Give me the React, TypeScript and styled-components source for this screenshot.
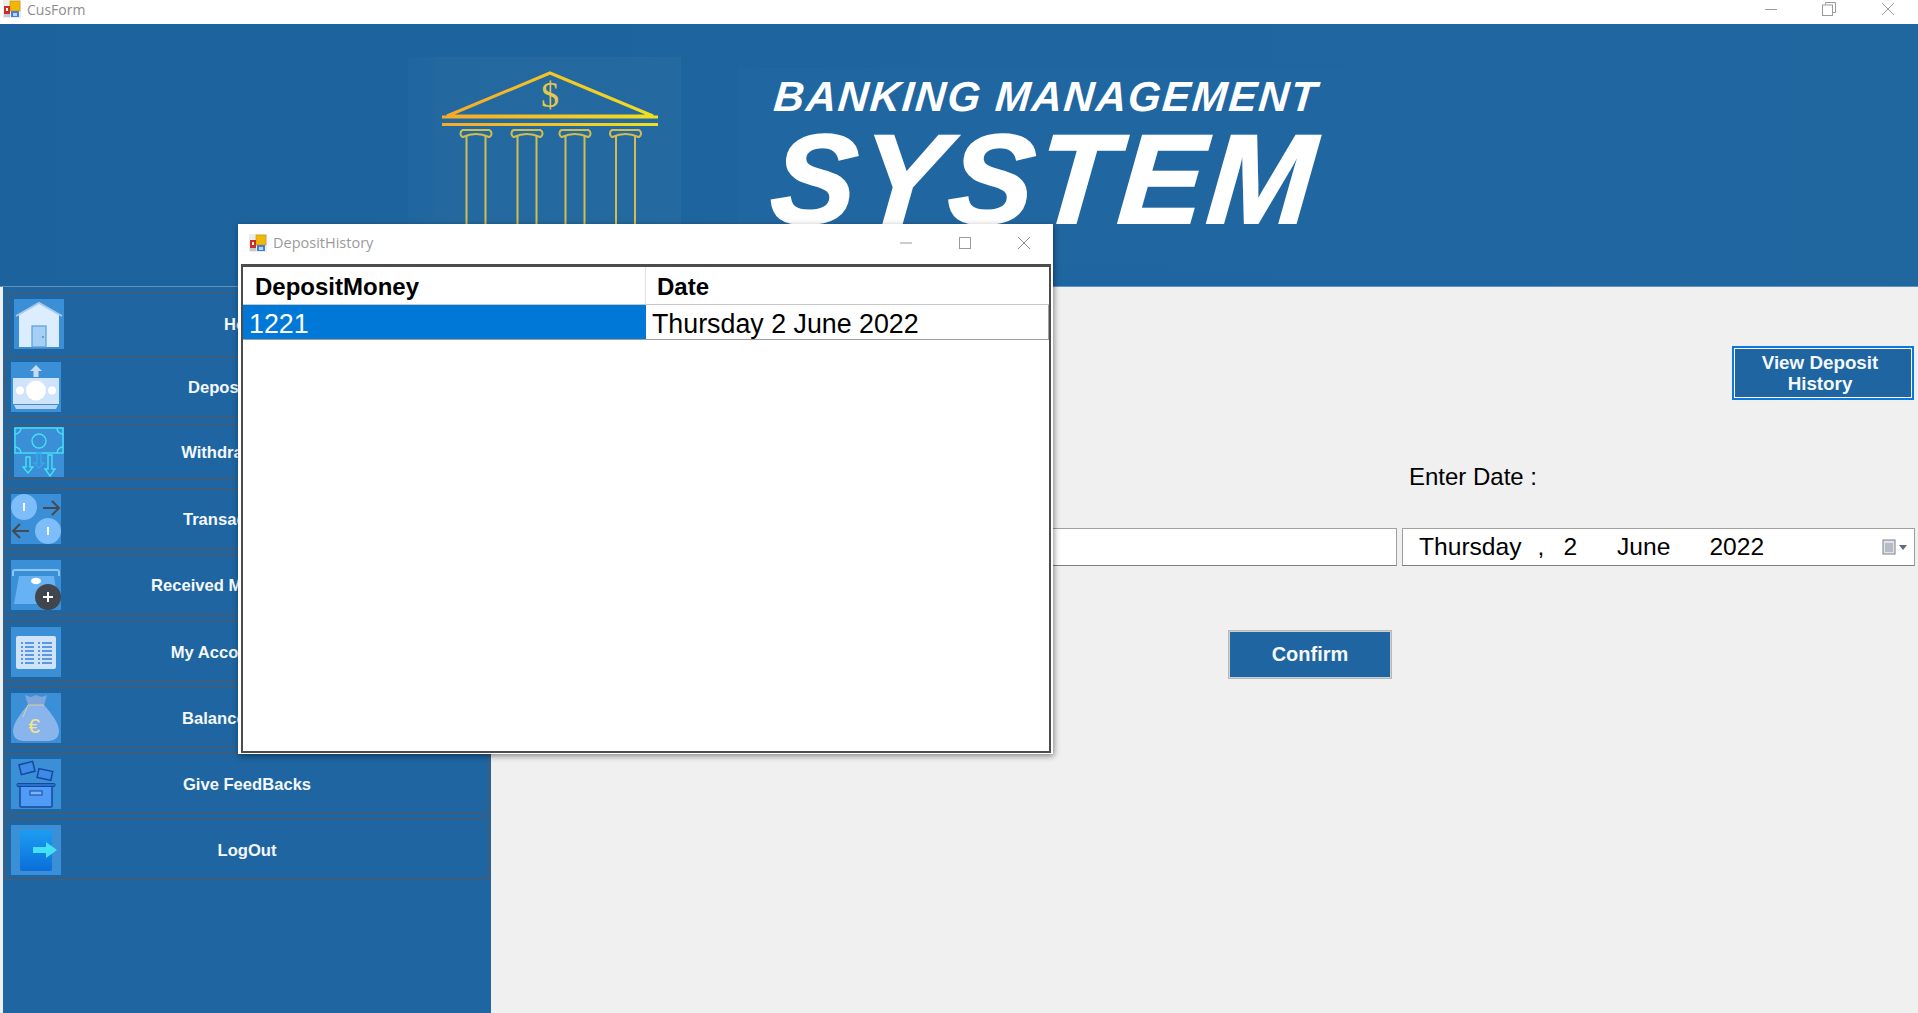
import React, { type FC, type ReactNode } from 'react'
import styled, { createGlobalStyle } from 'styled-components'

const GlobalStyle = createGlobalStyle`
  html, body {
    margin: 0;
    padding: 0;
    height: 100%;
    overflow: hidden;
    background: #f0f0f0;
  }
  * {
    box-sizing: border-box;
  }
`

const Page = styled.div`
  position: relative;
  width: 1918px;
  height: 1013px;
  display: flex;
  flex-direction: column;
  font-family: 'Liberation Sans', Arial, sans-serif;
  overflow: hidden;
`

const TitleBar = styled.div`
  height: 24px;
  flex: none;
  display: flex;
  align-items: flex-start;
  background: #fff;
  padding-left: 3px;
`

const TitleText = styled.span`
  font-family: 'Open Sans', sans-serif;
  font-size: 14px;
  line-height: 19px;
  color: #8c8c8c;
  margin-left: 6px;
`

const Controls = styled.div`
  margin-left: auto;
  display: flex;
  align-items: center;
`

const WindowControls = styled(Controls)`
  padding-top: 2px;
`

const ControlButton = styled.div<{ $width: number }>`
  width: ${({ $width }) => $width}px;
  display: flex;
  justify-content: center;
`

const Header = styled.header`
  height: 263px;
  flex: none;
  display: flex;
  align-items: flex-start;
  padding-left: 408px;
  background: linear-gradient(90deg, #1c639e 0%, #1f65a0 60%, #20669f 100%);
  border-bottom: 1px solid #5c93c1;
`

const BankPanel = styled.div`
  width: 273px;
  height: 229px;
  margin-top: 33px;
  padding-left: 7px;
  background: linear-gradient(90deg, #1f65a0 0%, #23689f 12%, #24699f 100%);
`

const LogoPanel = styled.div`
  width: 608px;
  height: 197px;
  margin: 44px 0 0 57px;
  padding-top: 5px;
  background: #2066a1;
  color: #fff;
  font-weight: 700;
  font-style: italic;
  white-space: nowrap;
`

const LogoTop = styled.div`
  font-size: 42px;
  line-height: 48px;
  margin-left: 34px;
  letter-spacing: 1.7px;
  transform: skewX(-5deg);
  transform-origin: left bottom;
`

const LogoBottom = styled.div`
  font-size: 127px;
  line-height: 117px;
  margin-left: 29px;
  letter-spacing: 4px;
  -webkit-text-stroke: 2px #fff;
  transform: skewX(-5deg);
  transform-origin: left bottom;
`

const Body = styled.div`
  flex: 1;
  display: flex;
  min-height: 0;
`

const Sidebar = styled.nav`
  width: 488px;
  margin-left: 3px;
  padding: 5px 2px 0 2px;
  background: #1e65a1;
  flex: none;
`

const MenuRow = styled.div<{ $gap: number; $inset: number; $height: number; $open?: boolean }>`
  display: grid;
  grid-template-columns: 50px 1fr 50px;
  align-items: center;
  height: ${({ $height }) => $height}px;
  margin-top: ${({ $gap }) => $gap}px;
  margin-left: ${({ $inset }) => $inset}px;
  padding: 0 ${({ $inset }) => 5 + $inset}px 0 5px;
  border: 1px solid #55595f;
  border-bottom-width: ${({ $open }) => ($open ? 0 : 1)}px;
`

const MenuLabel = styled.span`
  padding-top: 2px;
  text-align: center;
  color: #f4f8fc;
  font-size: 16.6px;
  font-weight: 700;
  white-space: nowrap;
`

const IconTile = styled.svg`
  display: block;
  width: 50px;
  height: 50px;
`

const Content = styled.main`
  flex: 1;
  display: flex;
  flex-direction: column;
  align-items: flex-end;
  padding: 59px 3px 0 0;
`

const HistoryButton = styled.button`
  width: 182px;
  height: 54px;
  margin-right: 1px;
  padding: 0 9px 0 3px;
  background: #1e65a1;
  border: 2px solid #0a78dc;
  box-shadow: inset 0 0 0 1px #fff;
  color: #f5f8fc;
  font-family: inherit;
  font-size: 18.8px;
  font-weight: 700;
  line-height: 21px;
`

const DateLabel = styled.label`
  margin: 63px 378px 0 0;
  color: #000;
  font-size: 24px;
  line-height: 28px;
`

const FieldRow = styled.div`
  display: flex;
  gap: 5px;
  margin-top: 37px;
`

const TextField = styled.div`
  width: 700px;
  height: 38px;
  background: #fff;
  border: 1px solid #a0a0a0;
  border-bottom-color: #808080;
`

const DateField = styled.div`
  width: 513px;
  height: 38px;
  display: flex;
  align-items: center;
  background: #fff;
  border: 1px solid #a0a0a0;
  border-bottom-color: #808080;
  font-size: 24.6px;
  color: #000;
  white-space: pre;
`

const DatePart = styled.span<{ $left: number }>`
  margin-left: ${({ $left }) => $left}px;
`

const CalendarButton = styled.svg`
  margin-left: auto;
  margin-right: 6px;
  width: 26px;
  height: 16px;
`

const ConfirmButton = styled.button`
  width: 164px;
  height: 49px;
  margin: 64px 523px 0 0;
  background: #1e65a1;
  border: 2px solid #cfcfcf;
  outline: 1px solid #b9b9b9;
  outline-offset: -1px;
  color: #f5f8fc;
  font-family: inherit;
  font-size: 20px;
  font-weight: 700;
`

const Dialog = styled.section`
  position: absolute;
  left: 238px;
  top: 224px;
  width: 815px;
  height: 530px;
  display: flex;
  flex-direction: column;
  padding: 0 2px 1px 3px;
  background: #fff;
  box-shadow: 1px 2px 6px rgba(0, 0, 0, 0.45);
`

const DialogBar = styled.div`
  height: 40px;
  flex: none;
  display: flex;
  align-items: center;
  padding: 0 0 3px 8px;
`

const DialogTitle = styled.span`
  font-family: 'Open Sans', sans-serif;
  font-size: 14.5px;
  color: #9a9a9a;
  margin-left: 6px;
`

const Grid = styled.div`
  flex: 1;
  background: #fff;
  border: 2px solid #4c4c4c;
  border-top-width: 3px;
`

const GridHead = styled.div`
  display: grid;
  grid-template-columns: 403px 1fr;
  height: 38px;
  border-bottom: 1px solid #c8c8c8;
`

const HeadCell = styled.div<{ $divider?: boolean }>`
  display: flex;
  align-items: center;
  padding: 2px 0 0 ${({ $divider }) => ($divider ? 11 : 12)}px;
  font-size: 24px;
  font-weight: 700;
  color: #000;
  border-right: ${({ $divider }) => ($divider ? 'none' : '1px solid #e2e2e2')};
`

const GridRow = styled.div`
  display: grid;
  grid-template-columns: 403px 1fr;
  height: 35px;
  border-bottom: 1px solid #a0a0a0;
  border-right: 1px solid #a0a0a0;
`

const DataCell = styled.div<{ $selected?: boolean }>`
  display: flex;
  align-items: center;
  min-height: 0;
  height: 34px;
  padding: 3px 0 0 6px;
  font-size: 26.8px;
  line-height: 28px;
  color: ${({ $selected }) => ($selected ? '#fff' : '#000')};
  background: ${({ $selected }) => ($selected ? '#0078d7' : '#fff')};
`

const AppIcon: FC = () => (
  <svg width="18" height="18" viewBox="0 0 18 18">
    <rect x="0" y="0" width="18" height="18" fill="#ececec" />
    <rect x="7" y="1" width="10" height="10" fill="#f2b705" stroke="#c98f00" strokeWidth="0.6" />
    <rect x="1" y="6" width="6" height="8" fill="#c9302c" />
    <rect x="3" y="8" width="2" height="3" fill="#fff" />
    <rect x="8" y="11" width="8" height="6" fill="#3f7fe0" />
    <rect x="10" y="13" width="4" height="3" fill="#bcd6fb" />
    <rect x="1" y="14" width="6" height="3" fill="#c9c9c9" />
  </svg>
)

const tile = '#3a8fd6'

const HomeIcon: FC = () => (
  <IconTile viewBox="0 0 50 50">
    <rect width="50" height="50" fill={tile} />
    <path d="M5 15 L25 4 L45 15 V48 H5 Z" fill="#dcedff" />
    <path d="M2 17 L25 4 L48 17" fill="none" stroke="#a9c8ea" strokeWidth="2" />
    <rect x="18" y="27" width="14" height="21" fill="#a5d0f6" stroke="#5b9fd8" strokeWidth="1.2" />
    <circle cx="29" cy="38" r="1" fill="#4a8cc6" />
  </IconTile>
)

const DepositIcon: FC = () => (
  <IconTile viewBox="0 0 50 50">
    <rect width="50" height="50" fill={tile} />
    <path d="M25 3 L31 9 H27.5 V15 H22.5 V9 H19 Z" fill="#c7ddf6" />
    <rect x="2" y="16" width="46" height="26" fill="#cfe4fb" />
    <circle cx="25" cy="28.5" r="10" fill="#fff" />
    <circle cx="9" cy="28.5" r="4" fill="#fff" />
    <circle cx="41" cy="28.5" r="4" fill="#fff" />
    <path d="M3 43 H47 L45 47 H5 Z" fill="#b9d5f3" />
  </IconTile>
)

const WithdrawIcon: FC = () => (
  <IconTile viewBox="0 0 50 50" fill="none" stroke="#45e0f5" strokeWidth="1.4">
    <rect width="50" height="50" fill={tile} stroke="none" />
    <rect x="1" y="1" width="48" height="25" />
    <circle cx="25" cy="14" r="7" />
    <path d="M1 7 A6 6 0 0 0 7 1 M43 1 A6 6 0 0 0 49 7 M1 20 A6 6 0 0 1 7 26 M43 26 A6 6 0 0 1 49 20" />
    <path d="M12 30 H16 V40 H19 L14 46 L9 40 H12 Z" />
    <path d="M23 26 H27 V36 H30 L25 41 L20 36 H23 Z" stroke="#35a9ee" />
    <path d="M34 28 H38 V42 H41 L36 49 L31 42 H34 Z" />
  </IconTile>
)

const TransferIcon: FC = () => (
  <IconTile viewBox="0 0 50 50">
    <rect width="50" height="50" fill={tile} />
    <circle cx="13" cy="13" r="13" fill="#7dbdf9" />
    <circle cx="37" cy="37" r="13" fill="#7dbdf9" />
    <rect x="12" y="9" width="2" height="8" fill="#fff" />
    <rect x="36" y="33" width="2" height="8" fill="#fff" />
    <path d="M32 14 H48 M41 7 L48 14 L41 21" fill="none" stroke="#454a52" strokeWidth="2" />
    <path d="M18 37 H2 M9 30 L2 37 L9 44" fill="none" stroke="#454a52" strokeWidth="2" />
  </IconTile>
)

const ReceivedIcon: FC = () => (
  <IconTile viewBox="0 0 50 50">
    <rect width="50" height="50" fill={tile} />
    <path d="M2 16 V12 Q2 10 4 10 H46 Q48 10 48 12 V16" fill="none" stroke="#8cc6f7" strokeWidth="2" />
    <path d="M8 16 H43 L47 44 H3 Z" fill="#67b2f3" />
    <ellipse cx="25" cy="21" rx="5" ry="3.2" fill="#fff" />
    <circle cx="37" cy="37" r="13" fill="#41464e" />
    <path d="M37 32 V42 M32 37 H42" stroke="#fff" strokeWidth="2" />
  </IconTile>
)

const AccountIcon: FC = () => {
  const rows = [16, 20, 24, 28, 32, 36]
  return (
    <IconTile viewBox="0 0 50 50">
      <rect width="50" height="50" fill={tile} />
      <rect x="5" y="9" width="40" height="33" rx="2" fill="#cfe4fb" />
      {rows.map((y) => (
        <g key={y} fill="#3f86d8">
          <rect x="10" y={y - 0.8} width="2" height="1.6" />
          <rect x="14" y={y - 0.8} width="9" height="1.6" />
          <rect x="27" y={y - 0.8} width="2" height="1.6" />
          <rect x="31" y={y - 0.8} width="10" height="1.6" />
        </g>
      ))}
    </IconTile>
  )
}

const BalanceIcon: FC = () => (
  <IconTile viewBox="0 0 50 50">
    <rect width="50" height="50" fill={tile} />
    <path d="M14 2 L20 4 L25 2 L31 4 L36 2 L33 12 H17 Z" fill="#7fa6dc" />
    <path d="M17 12 H33 C40 20 48 30 48 38 C48 46 42 48 36 48 H14 C8 48 2 46 2 38 C2 30 10 20 17 12 Z" fill="#8ab5ec" />
    <path d="M17 12 H33 M17 12 L12 24" fill="none" stroke="#e8d98a" strokeWidth="0.8" />
    <text x="23" y="40" fontFamily="Liberation Sans, sans-serif" fontSize="21" textAnchor="middle" fill="#f4e48c">€</text>
  </IconTile>
)

const FeedbackIcon: FC = () => (
  <IconTile viewBox="0 0 50 50">
    <rect width="50" height="50" fill={tile} />
    <g fill="#3f8ae6" stroke="#1548a0" strokeWidth="1.5">
      <rect x="9" y="4" width="14" height="10" transform="rotate(-14 16 9)" />
      <rect x="27" y="11" width="14" height="9" transform="rotate(12 34 15)" />
    </g>
    <rect x="9" y="27" width="32" height="21" rx="1" fill="#4f9bf6" stroke="#1548a0" strokeWidth="1.5" />
    <rect x="6" y="24.5" width="38" height="3" rx="1" fill="#2a6fc8" stroke="#1548a0" />
    <rect x="19" y="32" width="12" height="4" fill="#7ab4f5" stroke="#1548a0" />
  </IconTile>
)

const LogoutIcon: FC = () => (
  <IconTile viewBox="0 0 50 50">
    <defs>
      <linearGradient id="door" x1="0" y1="0" x2="0" y2="1">
        <stop offset="0" stopColor="#1d9df2" />
        <stop offset="1" stopColor="#0a6ed8" />
      </linearGradient>
    </defs>
    <rect width="50" height="50" fill={tile} />
    <rect x="9" y="5" width="32" height="41" rx="2" fill="url(#door)" />
    <path d="M22 22 H35 V17 L46 25 L35 33 V28 H22 Z" fill="#45e0f6" />
  </IconTile>
)

const BankDrawing: FC = () => (
  <svg width="266" height="229" viewBox="415 57 266 229">
    <defs>
      <linearGradient id="gold" x1="0" y1="0" x2="1" y2="0">
        <stop offset="0" stopColor="#f7a928" />
        <stop offset="1" stopColor="#f0e020" />
      </linearGradient>
    </defs>
    <path d="M447 116 L550 73 L653 116 Z" fill="none" stroke="url(#gold)" strokeWidth="3" />
    <path d="M442 117 H658 M442 124.5 H658" stroke="url(#gold)" strokeWidth="3.2" />
    <text x="550" y="107" textAnchor="middle" fontFamily="Liberation Serif, serif" fontSize="36" fill="#e6c84e">$</text>
    {[476, 527, 575, 625.5].map((x) => (
      <g key={x} fill="none" stroke="#d4bd50" strokeWidth="2">
        <path d={`M${x - 13} 137 H${x - 13.5} A4 4 0 0 1 ${x - 13.5} 130 H${x + 13.5} A4 4 0 0 1 ${x + 13.5} 137 H${x + 13} Q${x} 131 ${x - 13} 137 Z`} />
        <path d={`M${x - 9.5} 136 V286 M${x + 9.5} 136 V286`} />
      </g>
    ))}
  </svg>
)

interface MenuEntry {
  label: string
  gap: number
  inset: number
  height: number
  open?: boolean
  icon: ReactNode
}

const menu: MenuEntry[] = [
  { label: 'Home', gap: 0, inset: 3, height: 63, open: true, icon: <HomeIcon /> },
  { label: 'Deposit Money', gap: 1, inset: 0, height: 61, icon: <DepositIcon /> },
  { label: 'Withdraw Money', gap: 7, inset: 3, height: 56, icon: <WithdrawIcon /> },
  { label: 'Transaction Log', gap: 8, inset: 0, height: 61, icon: <TransferIcon /> },
  { label: 'Received Money History', gap: 5, inset: 0, height: 61, icon: <ReceivedIcon /> },
  { label: 'My Account Details', gap: 6, inset: 0, height: 61, icon: <AccountIcon /> },
  { label: 'Balance Enquiry', gap: 5, inset: 0, height: 61, icon: <BalanceIcon /> },
  { label: 'Give FeedBacks', gap: 5, inset: 0, height: 61, icon: <FeedbackIcon /> },
  { label: 'LogOut', gap: 5, inset: 0, height: 61, icon: <LogoutIcon /> },
]

const App: FC = () => (
  <Page>
    <GlobalStyle />
    <TitleBar>
      <AppIcon />
      <TitleText>CusForm</TitleText>
      <WindowControls>
        <ControlButton $width={58}>
          <svg width="14" height="14" viewBox="0 0 14 14"><path d="M1 7.5 H13" stroke="#9a9a9a" strokeWidth="1" /></svg>
        </ControlButton>
        <ControlButton $width={58}>
          <svg width="14" height="14" viewBox="0 0 14 14" fill="none" stroke="#9a9a9a"><path d="M3.5 2.5 V0.5 H13.5 V10.5 H11" /><rect x="0.5" y="3" width="10" height="10.5" /></svg>
        </ControlButton>
        <ControlButton $width={60}>
          <svg width="14" height="14" viewBox="0 0 14 14"><path d="M1 1 L13 13 M13 1 L1 13" stroke="#9a9a9a" /></svg>
        </ControlButton>
      </WindowControls>
    </TitleBar>

    <Header>
      <BankPanel>
        <BankDrawing />
      </BankPanel>
      <LogoPanel>
        <LogoTop>BANKING MANAGEMENT</LogoTop>
        <LogoBottom>SYSTEM</LogoBottom>
      </LogoPanel>
    </Header>

    <Body>
      <Sidebar>
        {menu.map((item) => (
          <MenuRow key={item.label} $gap={item.gap} $inset={item.inset} $height={item.height} $open={item.open}>
            {item.icon}
            <MenuLabel>{item.label}</MenuLabel>
          </MenuRow>
        ))}
      </Sidebar>

      <Content>
        <HistoryButton>View Deposit History</HistoryButton>
        <DateLabel>Enter Date :</DateLabel>
        <FieldRow>
          <TextField />
          <DateField>
            <DatePart $left={16}>Thursday</DatePart>
            <DatePart $left={16}>,</DatePart>
            <DatePart $left={19}>2</DatePart>
            <DatePart $left={40}>June</DatePart>
            <DatePart $left={39}>2022</DatePart>
            <CalendarButton viewBox="0 0 26 16">
              <rect x="1" y="1" width="12" height="14" fill="#dfe3e8" stroke="#7d8288" />
              <rect x="3" y="4" width="8" height="9" fill="#b6bcc4" />
              <path d="M17 6 H25 L21 11 Z" fill="#5d6d80" />
            </CalendarButton>
          </DateField>
        </FieldRow>
        <ConfirmButton>Confirm</ConfirmButton>
      </Content>
    </Body>

    <Dialog>
      <DialogBar>
        <AppIcon />
        <DialogTitle>DepositHistory</DialogTitle>
        <Controls>
          <ControlButton $width={54}>
            <svg width="14" height="14" viewBox="0 0 14 14"><path d="M1 7 H13" stroke="#9a9a9a" /></svg>
          </ControlButton>
          <ControlButton $width={64}>
            <svg width="14" height="14" viewBox="0 0 14 14" fill="none" stroke="#9a9a9a"><rect x="1.5" y="1.5" width="11" height="11" /></svg>
          </ControlButton>
          <ControlButton $width={54}>
            <svg width="14" height="14" viewBox="0 0 14 14"><path d="M1 1 L13 13 M13 1 L1 13" stroke="#8c8c8c" /></svg>
          </ControlButton>
        </Controls>
      </DialogBar>
      <Grid>
        <GridHead>
          <HeadCell>DepositMoney</HeadCell>
          <HeadCell $divider>Date</HeadCell>
        </GridHead>
        <GridRow>
          <DataCell $selected>1221</DataCell>
          <DataCell>Thursday 2 June 2022</DataCell>
        </GridRow>
      </Grid>
    </Dialog>
  </Page>
)

export default App
